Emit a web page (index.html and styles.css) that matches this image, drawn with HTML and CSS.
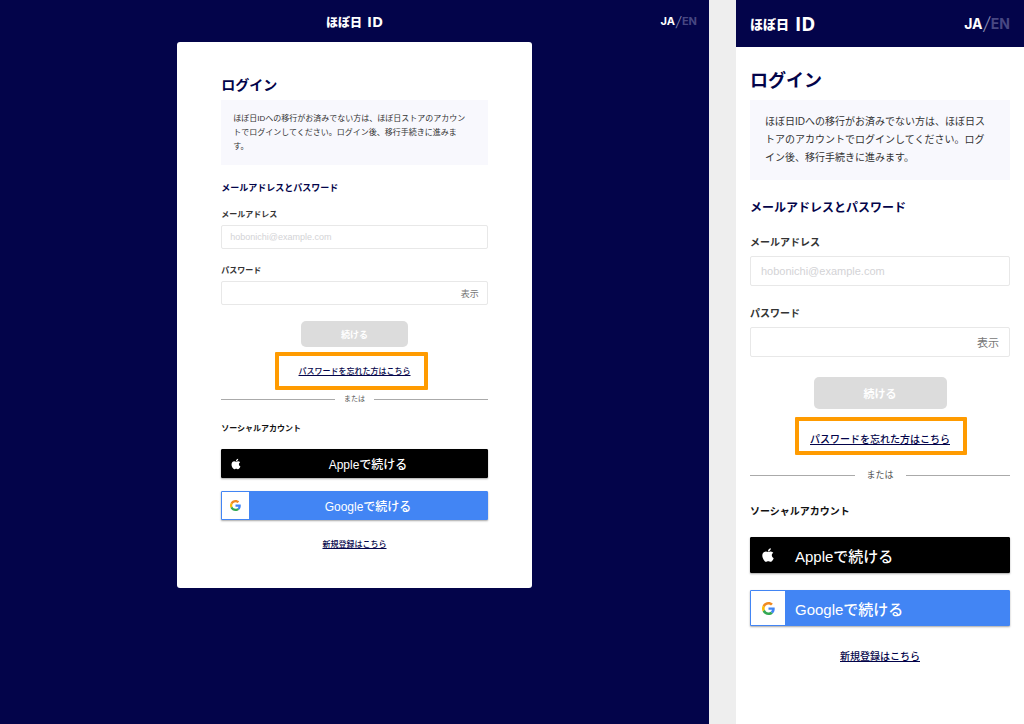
FILE: index.html
```
<!DOCTYPE html>
<html lang="ja">

<head>
    <meta charset="UTF-8">
    <meta name="viewport" content="width=device-width, initial-scale=1.0">
    <title>ログイン - ほぼ日ID</title>
    <link rel="stylesheet" href="styles.css">
</head>

<body>
    <svg class="symbols" aria-hidden="true">
        <symbol id="apple" viewBox="0 0 24 24">
            <path fill="#fff" d="M17.05 20.28c-.98.95-2.05.8-3.08.35-1.09-.46-2.09-.48-3.24 0-1.44.62-2.2.44-3.06-.35C2.79 15.25 3.51 7.59 9.05 7.31c1.35.07 2.29.74 3.08.8 1.18-.24 2.31-.93 3.57-.84 1.51.12 2.65.72 3.4 1.8-3.12 1.87-2.38 5.98.48 7.13-.57 1.5-1.31 2.99-2.54 4.09zM12.03 7.25c-.15-2.23 1.66-4.07 3.74-4.25.29 2.58-2.34 4.5-3.74 4.25z" />
        </symbol>
        <symbol id="google" viewBox="0 0 48 48">
            <path fill="#F08A20" d="M24 9.5c3.54 0 6.71 1.22 9.21 3.6l6.85-6.85C35.9 2.38 30.47 0 24 0 14.62 0 6.51 5.38 2.56 13.22l7.98 6.19C12.43 13.72 17.74 9.5 24 9.5z" />
            <path fill="#4285F4" d="M46.98 24.55c0-1.57-.15-3.09-.38-4.55H24v9.02h12.94c-.58 2.96-2.26 5.48-4.78 7.18l7.73 6c4.51-4.18 7.09-10.36 7.09-17.65z" />
            <path fill="#FBBC05" d="M10.53 28.59c-.48-1.45-.76-2.99-.76-4.59s.27-3.14.76-4.59l-7.98-6.19C.92 16.46 0 20.12 0 24c0 3.88.92 7.54 2.56 10.78l7.97-6.19z" />
            <path fill="#34A853" d="M24 48c6.48 0 11.93-2.13 15.89-5.81l-7.73-6c-2.15 1.45-4.92 2.3-8.16 2.3-6.26 0-11.57-4.22-13.47-9.91l-7.98 6.19C6.51 42.62 14.62 48 24 48z" />
        </symbol>
    </svg>

    <div class="screens">
        <!-- desktop -->
        <section class="screen pc">
            <header class="header">
                <a class="logo" href="#">ほぼ日<span class="logo-id">ID</span></a>
                <div class="lang"><a class="current" href="#">JA</a><span class="slash">/</span><a href="#">EN</a></div>
            </header>
            <main class="login">
                <h1 class="title">ログイン</h1>
                <p class="note">ほぼ日IDへの移行がお済みでない方は、ほぼ日ストアのアカウントでログインしてください。ログイン後、移行手続きに進みます。</p>
                <form class="form">
                    <h2 class="heading">メールアドレスとパスワード</h2>
                    <label class="label" for="pc-mail">メールアドレス</label>
                    <div class="field">
                        <input class="input" id="pc-mail" type="email" placeholder="hobonichi@example.com">
                    </div>
                    <label class="label label-next" for="pc-pass">パスワード</label>
                    <div class="field">
                        <input class="input" id="pc-pass" type="password">
                        <button class="show" type="button">表示</button>
                    </div>
                    <button class="submit" type="submit">続ける</button>
                </form>
                <div class="forgot"><a class="link" href="#">パスワードを忘れた方はこちら</a></div>
                <div class="or">または</div>
                <h3 class="social-title">ソーシャルアカウント</h3>
                <button class="social apple" type="button">
                    <span class="icon"><svg><use href="#apple" /></svg></span>
                    <span class="social-text">Appleで続ける</span>
                </button>
                <button class="social google" type="button">
                    <span class="icon"><svg><use href="#google" /></svg></span>
                    <span class="social-text">Googleで続ける</span>
                </button>
                <div class="signup"><a class="link" href="#">新規登録はこちら</a></div>
            </main>
        </section>

        <!-- smartphone -->
        <section class="screen sp">
            <header class="header">
                <a class="logo" href="#">ほぼ日<span class="logo-id">ID</span></a>
                <div class="lang"><a class="current" href="#">JA</a><span class="slash">/</span><a href="#">EN</a></div>
            </header>
            <main class="login">
                <h1 class="title">ログイン</h1>
                <p class="note">ほぼ日IDへの移行がお済みでない方は、ほぼ日ストアのアカウントでログインしてください。ログイン後、移行手続きに進みます。</p>
                <form class="form">
                    <h2 class="heading">メールアドレスとパスワード</h2>
                    <label class="label" for="sp-mail">メールアドレス</label>
                    <div class="field">
                        <input class="input" id="sp-mail" type="email" placeholder="hobonichi@example.com">
                    </div>
                    <label class="label label-next" for="sp-pass">パスワード</label>
                    <div class="field">
                        <input class="input" id="sp-pass" type="password">
                        <button class="show" type="button">表示</button>
                    </div>
                    <button class="submit" type="submit">続ける</button>
                </form>
                <div class="forgot"><a class="link" href="#">パスワードを忘れた方はこちら</a></div>
                <div class="or">または</div>
                <h3 class="social-title">ソーシャルアカウント</h3>
                <button class="social apple" type="button">
                    <span class="icon"><svg><use href="#apple" /></svg></span>
                    <span class="social-text">Appleで続ける</span>
                </button>
                <button class="social google" type="button">
                    <span class="icon"><svg><use href="#google" /></svg></span>
                    <span class="social-text">Googleで続ける</span>
                </button>
                <div class="signup"><a class="link" href="#">新規登録はこちら</a></div>
            </main>
        </section>
    </div>
</body>

</html>
```
FILE: styles.css
```
*,
*::before,
*::after {
    box-sizing: border-box;
}

body {
    margin: 0;
    font-family: "Liberation Sans", "Noto Sans CJK JP", sans-serif;
    color: #333;
    background-color: #eee;
}

h1,
h2,
h3,
p {
    margin: 0;
}

button,
input {
    font-family: inherit;
    padding: 0;
    border: none;
}

button {
    cursor: pointer;
}

.symbols {
    display: none;
}

.screens {
    display: grid;
    grid-template-columns: minmax(0, 1fr) 288px;
    gap: 27px;
    min-height: 100vh;
}

.pc {
    background-color: #03044a;
}

.sp {
    background-color: #fff;
}

/* header */
.header {
    display: grid;
    align-items: center;
    background-color: #03044a;
}

.pc .header {
    grid-template-columns: 1fr auto 1fr;
    height: 42px;
    padding: 0 12px;
}

.sp .header {
    grid-template-columns: 1fr auto;
    height: 47px;
    padding: 0 14px;
}

.logo {
    display: flex;
    align-items: center;
    color: #fff;
    font-weight: 900;
    text-decoration: none;
}

.pc .logo {
    grid-column: 2;
    gap: 5px;
    font-size: 12px;
}

.sp .logo {
    gap: 6px;
    font-size: 13px;
}

.logo-id {
    font-family: "Open Sans", sans-serif;
    font-weight: 700;
}

.pc .logo-id {
    font-size: 15px;
}

.sp .logo-id {
    font-size: 19px;
}

.lang {
    display: flex;
    align-items: center;
    justify-content: flex-end;
    font-family: Inter, sans-serif;
    font-weight: 700;
}

.lang a {
    color: #474782;
    text-decoration: none;
}

.lang .current {
    color: #fff;
}

.slash {
    padding: 0 1px;
    color: #8a8ab0;
    font-weight: 300;
    font-style: italic;
}

.pc .lang {
    font-size: 11px;
}

.sp .lang {
    font-size: 14px;
}

.pc .slash {
    font-size: 14px;
}

.sp .slash {
    font-size: 18px;
}

/* login */
.pc .login {
    width: 50%;
    margin: 0 auto;
    padding: 33px 44px 37px;
    background-color: #fff;
    border-radius: 3px;
}

.sp .login {
    padding: 21px 14px;
}

.title {
    color: #03044a;
    font-weight: 700;
}

.pc .title {
    font-size: 14px;
    line-height: 20px;
}

.sp .title {
    font-size: 18px;
    line-height: 26px;
}

.note {
    background-color: #f8f8fd;
}

.pc .note {
    margin-top: 5px;
    padding: 12px 18px 11px 12px;
    font-size: 8px;
    line-height: 14px;
}

.sp .note {
    margin-top: 6px;
    padding: 13px 18px 13px 15px;
    font-size: 10px;
    line-height: 18px;
}

.form {
    display: flex;
    flex-direction: column;
}

.heading {
    color: #03044a;
}

.pc .heading {
    margin: 16px 0 14px;
    font-size: 9px;
    line-height: 14px;
}

.sp .heading {
    margin: 19px 0;
    font-size: 12px;
    line-height: 18px;
}

.label {
    font-weight: 700;
}

.pc .label {
    margin-bottom: 4px;
    font-size: 8px;
    line-height: 12px;
}

.sp .label {
    margin-bottom: 6px;
    font-size: 10px;
    line-height: 14px;
}

.pc .label-next {
    margin-top: 16px;
}

.sp .label-next {
    margin-top: 21px;
}

.field {
    display: flex;
    align-items: center;
    border: 1px solid #e8e8e8;
    border-radius: 2px;
}

.pc .field {
    height: 24px;
    padding: 0 8px;
}

.sp .field {
    height: 30px;
    padding: 0 10px;
}

.input {
    flex: 1;
    min-width: 0;
    background: none;
    outline: none;
}

.input::placeholder {
    color: #d3d3d6;
}

.show {
    background: none;
    color: #777;
}

.pc .input,
.pc .show {
    font-size: 9px;
}

.sp .input,
.sp .show {
    font-size: 11px;
}

.submit {
    align-self: center;
    background-color: #dcdcdc;
    color: #fff;
    font-weight: 700;
    border-radius: 5px;
}

.pc .submit {
    width: 107px;
    height: 26px;
    margin-top: 16px;
    font-size: 9px;
}

.sp .submit {
    width: 133px;
    height: 32px;
    margin-top: 20px;
    font-size: 11px;
}

.link {
    color: #03044a;
    font-weight: 500;
    text-underline-offset: 1px;
}

.forgot,
.signup {
    text-align: center;
}

.pc .forgot,
.pc .signup {
    margin-top: 19px;
    font-size: 8px;
    line-height: 12px;
}

.sp .forgot,
.sp .signup {
    margin-top: 24px;
    font-size: 10px;
    line-height: 14px;
}

/* orange frame drawn over the link */
.forgot {
    position: relative;
}

.forgot::after {
    content: "";
    position: absolute;
    border: 4px solid #ff9b00;
    border-radius: 1px;
    height: 38px;
    pointer-events: none;
}

.pc .forgot::after {
    width: 153px;
    top: -14px;
    left: calc(50% - 80px);
}

.sp .forgot::after {
    width: 172px;
    top: -16px;
    left: calc(50% - 85px);
}

.or {
    display: flex;
    align-items: center;
    color: #555;
}

.or::before,
.or::after {
    content: "";
    flex: 1;
    height: 1px;
    background-color: #aaa;
}

.pc .or {
    gap: 9px;
    margin-top: 16px;
    font-size: 7px;
    line-height: 10px;
}

.sp .or {
    gap: 12px;
    margin-top: 22px;
    font-size: 9px;
    line-height: 12px;
}

.social-title {
    color: #111;
}

.pc .social-title {
    margin-top: 19px;
    font-size: 8px;
    line-height: 12px;
}

.sp .social-title {
    margin-top: 24px;
    font-size: 10px;
    line-height: 14px;
}

.social {
    display: flex;
    align-items: stretch;
    width: 100%;
    color: #fff;
    font-weight: 500;
    border-radius: 1px;
    box-shadow: 0 1px 2px rgba(0, 0, 0, 0.35);
}

.apple {
    background-color: #000;
    border: 1px solid #000;
}

.google {
    background-color: #4285f4;
    border: 1px solid #4285f4;
}

.pc .social {
    height: 29px;
    margin-top: 13px;
    font-size: 12px;
}

.sp .social {
    height: 36px;
    margin-top: 17px;
    font-size: 15px;
}

.pc .apple {
    margin-top: 14px;
}

.sp .apple {
    margin-top: 18px;
}

.icon {
    display: flex;
    align-items: center;
    justify-content: center;
}

.pc .icon {
    width: 27px;
}

.sp .icon {
    width: 34px;
}

.google .icon {
    background-color: #fff;
}

.pc .icon svg {
    width: 11px;
    height: 11px;
}

.sp .icon svg {
    width: 13px;
    height: 13px;
}

.pc .apple svg {
    width: 14px;
    height: 14px;
}

.sp .apple svg {
    width: 18px;
    height: 18px;
}

.social-text {
    flex: 1;
    align-self: center;
}

.sp .social-text {
    padding-left: 10px;
    text-align: left;
}
```
